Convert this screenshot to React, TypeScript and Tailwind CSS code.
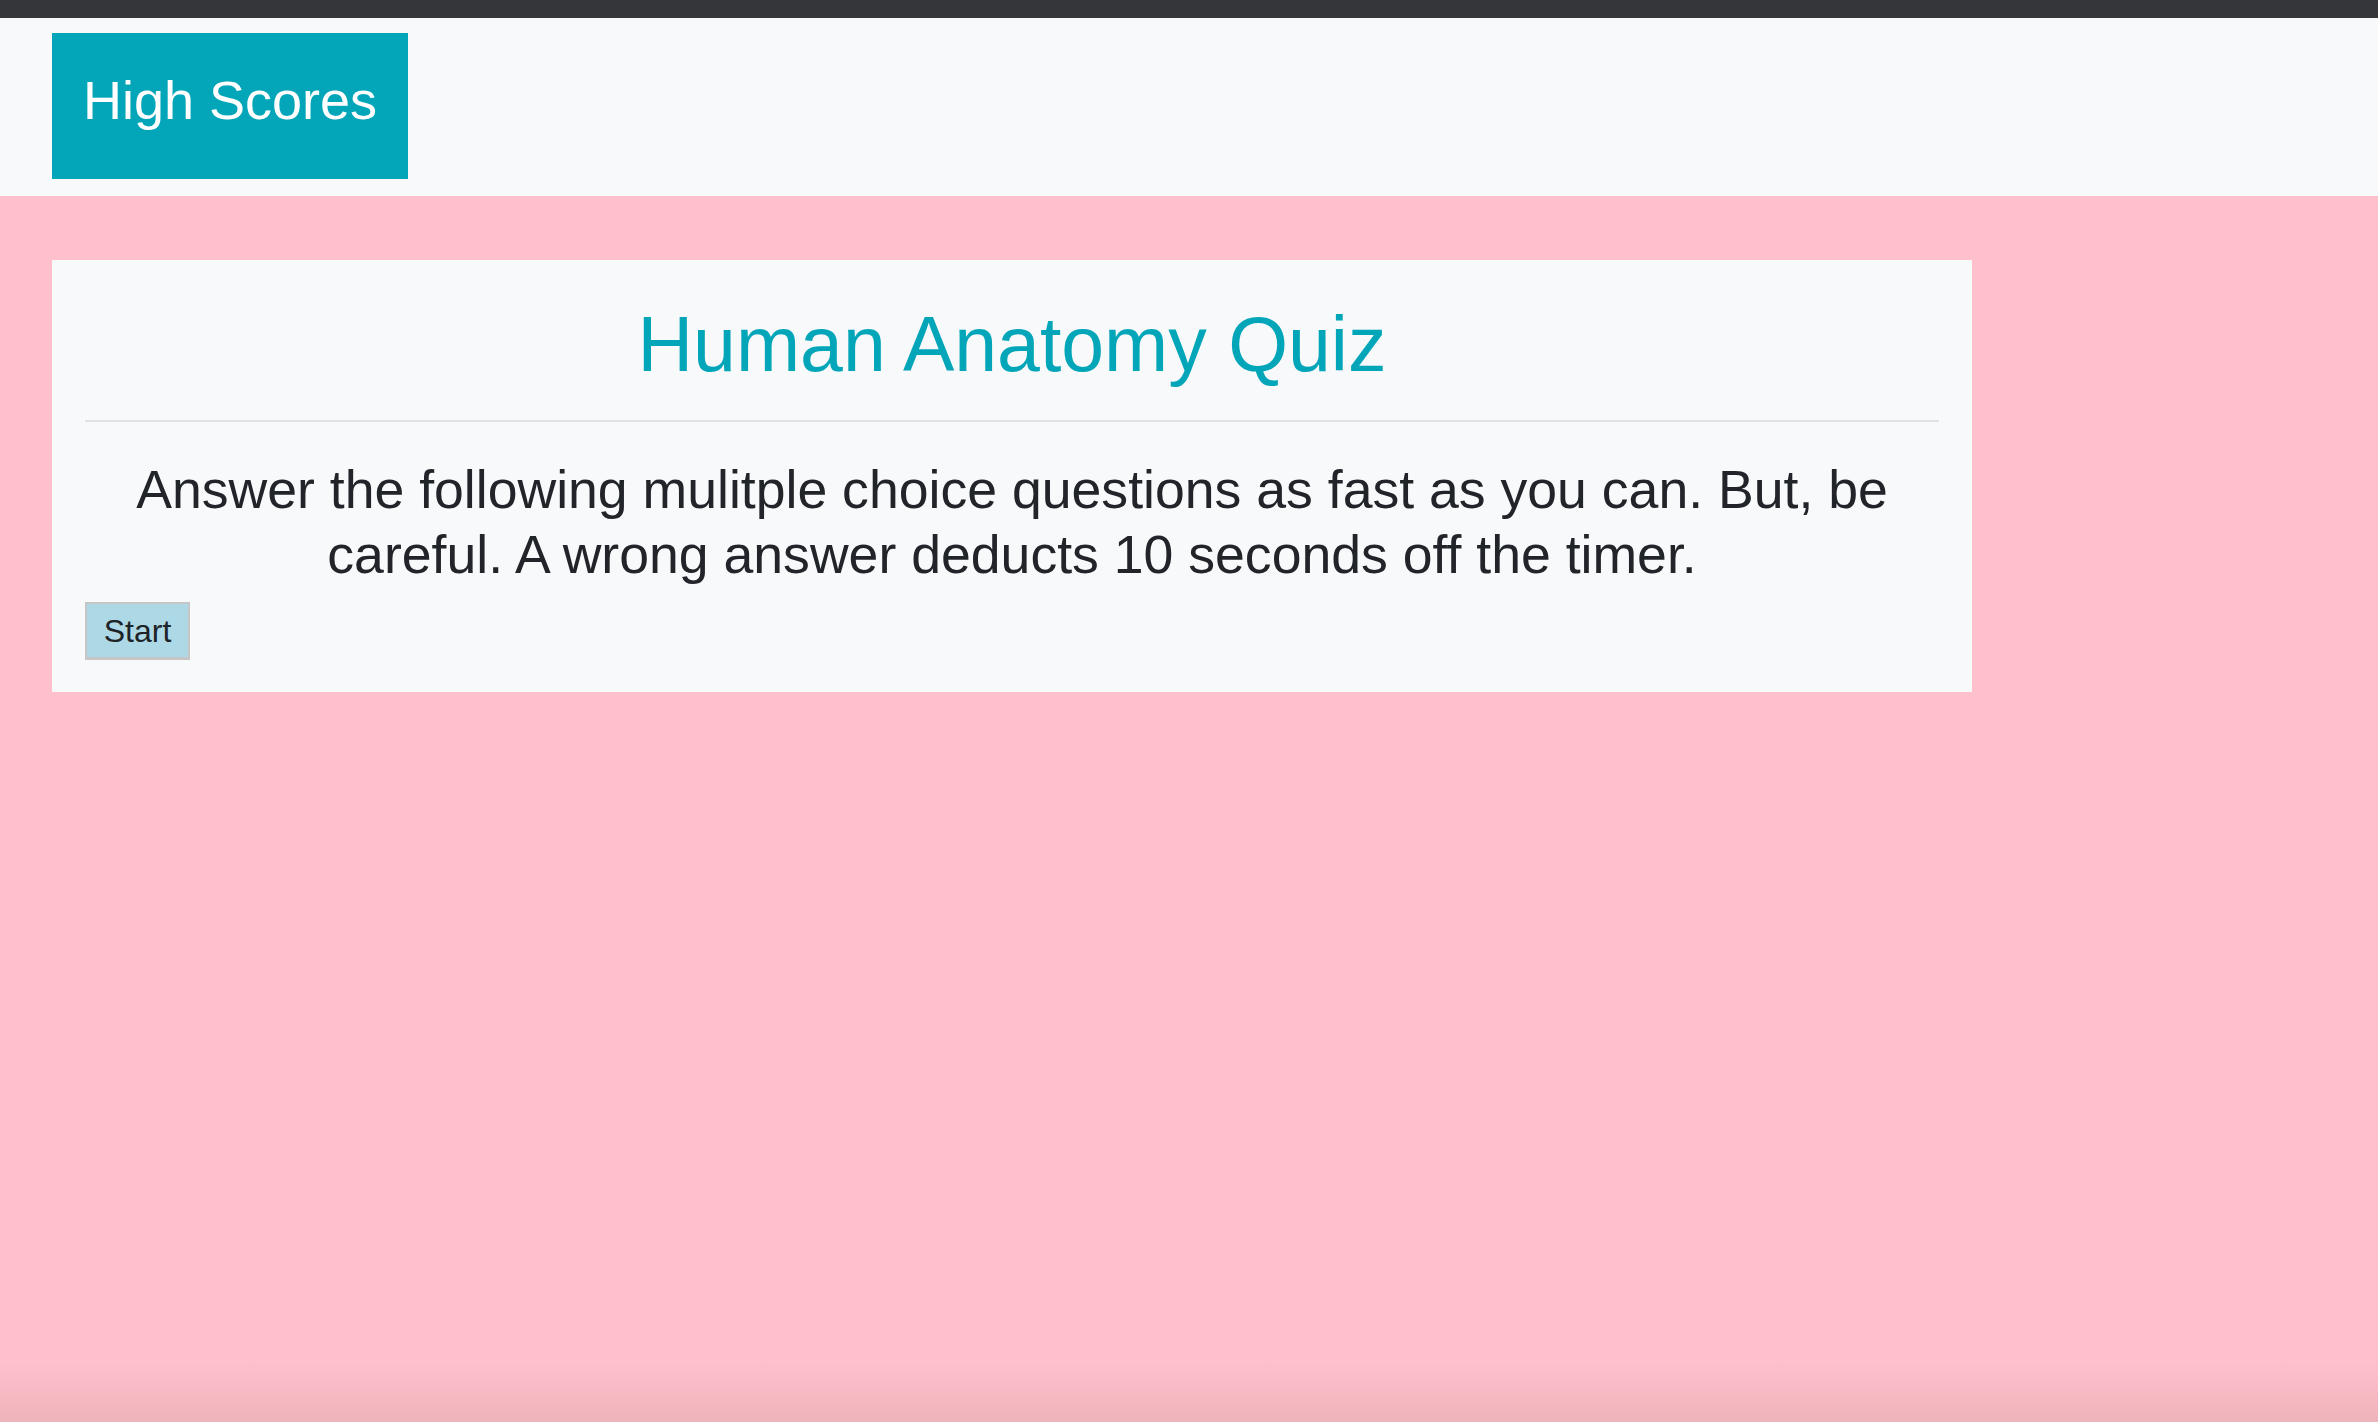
import React from "react";

const App = () => {
  return (
    <div
      className="min-h-[1422px] w-full bg-[linear-gradient(to_bottom,#ffc0cb_0,#ffc0cb_1362px,#efb3bc_1422px)]"
      style={{ fontFamily: '"Liberation Sans", Arial, sans-serif' }}
    >
      {/* browser strip */}
      <div className="h-[18px] w-full bg-[#35363a]" />

      {/* Navbar */}
      <nav className="h-[178px] w-full bg-[#f8f9fa] pt-[15px] pl-[52px]">
        <button className="flex h-[146px] w-[356px] items-center justify-center bg-[#03a5b8] pb-[12px] text-[54px] text-white">
          High Scores
        </button>
      </nav>

      {/* Quiz card */}
      <main className="pt-[64px] pl-[52px]">
        <section className="w-[1920px] bg-[#f8f9fa] px-[33px] pt-[38px] pb-[32px]">
          <h1 className="text-center text-[77px] leading-[92px] text-[#03a6b9]">
            Human Anatomy Quiz
          </h1>
          <hr className="mt-[30px] border-t-2 border-[#dfe1e4]" />
          <p className="mt-[35px] text-center text-[53.6px] leading-[65px] text-[#212529]">
            Answer the following mulitple choice questions as fast as you can. But, be
            <br />
            careful. A wrong answer deducts 10 seconds off the timer.
          </p>
          <button className="mt-[15px] flex h-[58px] w-[105px] items-center justify-center border-2 border-b-[3px] border-[#c6c6c6] bg-[#add8e6] text-[32px] text-[#1d2326]">
            Start
          </button>
        </section>
      </main>
    </div>
  );
};

export default App;
